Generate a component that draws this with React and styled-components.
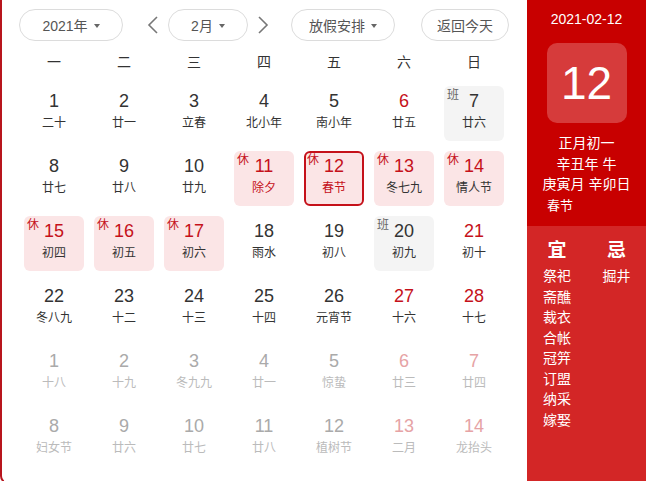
import React from "react";
import styled, { createGlobalStyle } from "styled-components";

const Global = createGlobalStyle`
  html, body { margin: 0; padding: 0; background: #fff; overflow: hidden; }
  body { font-family: "Liberation Sans", "Noto Sans CJK SC", sans-serif; }
`;

const RED = "#c5111a";

const Frame = styled.div`
  display: flex;
  width: 644px;
  height: 482px;
  border-left: 2px solid #b8151d;
  border-bottom: 2px solid #b8151d;
  border-bottom-left-radius: 8px;
  overflow: hidden;
`;

const Main = styled.div`
  width: 525px;
  flex: none;
  padding: 9px 18px 0 17px;
  box-sizing: border-box;
`;

const Toolbar = styled.div`
  display: flex;
  align-items: center;
  height: 32px;
`;

const Pill = styled.div`
  box-sizing: border-box;
  height: 32px;
  width: ${(p) => p.$w}px;
  margin-left: ${(p) => p.$ml || 0}px;
  border: 1px solid #dcdcdc;
  border-radius: 16px;
  display: flex;
  align-items: center;
  justify-content: center;
  gap: 6px;
  font-size: 14px;
  color: #555;
`;

const Caret = styled.span`
  width: 0;
  height: 0;
  border-left: 3.5px solid transparent;
  border-right: 3.5px solid transparent;
  border-top: 4px solid #666;
  margin-top: 1px;
`;

const Chevron = styled.div`
  width: 14px;
  height: 32px;
  margin-left: ${(p) => p.$ml}px;
  display: flex;
  align-items: center;
  justify-content: center;
`;

const Grid = styled.div`
  display: grid;
  grid-template-columns: repeat(7, 70px);
  grid-template-rows: 40px;
  grid-auto-rows: 65px;
`;

const WeekHead = styled.div`
  height: 40px;
  display: flex;
  align-items: center;
  justify-content: center;
  font-size: 14px;
  color: #333;
`;

const Cell = styled.div`
  padding: 5px;
  box-sizing: border-box;
`;

const DayBox = styled.div`
  position: relative;
  height: 55px;
  box-sizing: border-box;
  border-radius: 6px;
  text-align: center;
  padding-top: ${(p) => (p.$today ? 2 : 4)}px;
  background: ${(p) =>
    p.$kind === "rest" ? "#fbe5e6" : p.$kind === "work" ? "#f4f4f4" : "transparent"};
  border: ${(p) => (p.$today ? `2px solid ${RED}` : "none")};
`;

const Num = styled.div`
  font-size: 18px;
  line-height: 22px;
  color: ${(p) => p.$c};
`;

const Lunar = styled.div`
  margin-top: 3px;
  font-size: 12px;
  line-height: 16px;
  color: ${(p) => p.$c};
`;

const Tag = styled.span`
  position: absolute;
  left: ${(p) => (p.$today ? 1 : 3)}px;
  top: ${(p) => (p.$today ? 0 : 2)}px;
  font-size: 12px;
  line-height: 14px;
  color: ${(p) => (p.$work ? "#666" : RED)};
`;

const Side = styled.div`
  width: 119px;
  flex: none;
  display: flex;
  flex-direction: column;
  color: #fff;
`;

const SideTop = styled.div`
  background: #c80000;
  height: 226px;
  display: flex;
  flex-direction: column;
  align-items: center;
  padding-top: 11px;
  box-sizing: border-box;
`;

const DateLine = styled.div`
  font-size: 14px;
  line-height: 17px;
`;

const BigDay = styled.div`
  margin-top: 15px;
  width: 80px;
  height: 80px;
  border-radius: 10px;
  background: #d63b3b;
  display: flex;
  align-items: center;
  justify-content: center;
  font-size: 46px;
  line-height: 1;
`;

const Info = styled.div`
  margin-top: 10px;
  font-size: 14px;
  line-height: 20.5px;
  text-align: center;
`;

const Festival = styled.div`
  align-self: flex-start;
  margin: 1px 0 0 20px;
  font-size: 13px;
  line-height: 20px;
`;

const SideBottom = styled.div`
  flex: 1;
  background: #d32626;
  display: grid;
  grid-template-columns: 60px 59px;
  align-content: start;
  padding-top: 12px;
`;

const YiCol = styled.div`
  display: flex;
  flex-direction: column;
  align-items: center;
`;

const YiHead = styled.div`
  font-size: 19px;
  font-weight: bold;
  line-height: 26px;
  margin-bottom: 2px;
`;

const YiItem = styled.div`
  font-size: 14px;
  line-height: 20.5px;
`;

const ChevronIcon = ({ dir }) => (
  <svg width="12" height="18" viewBox="0 0 12 18">
    <path
      d={dir === "l" ? "M10 1 L2 9 L10 17" : "M2 1 L10 9 L2 17"}
      fill="none"
      stroke="#777"
      strokeWidth="1.6"
    />
  </svg>
);

const N = "#333";
const R = RED;
const G = "#aaa";
const GL = "#bbb";
const PR = "#e6a3a5";

const days = [
  { d: 1, l: "二十" }, { d: 2, l: "廿一" }, { d: 3, l: "立春" }, { d: 4, l: "北小年" },
  { d: 5, l: "南小年" }, { d: 6, l: "廿五", c: R }, { d: 7, l: "廿六", k: "work" },
  { d: 8, l: "廿七" }, { d: 9, l: "廿八" }, { d: 10, l: "廿九" },
  { d: 11, l: "除夕", k: "rest", c: R, lc: R }, { d: 12, l: "春节", k: "rest", c: R, lc: R, today: true },
  { d: 13, l: "冬七九", k: "rest", c: R }, { d: 14, l: "情人节", k: "rest", c: R },
  { d: 15, l: "初四", k: "rest", c: R }, { d: 16, l: "初五", k: "rest", c: R },
  { d: 17, l: "初六", k: "rest", c: R }, { d: 18, l: "雨水" }, { d: 19, l: "初八" },
  { d: 20, l: "初九", k: "work" }, { d: 21, l: "初十", c: R },
  { d: 22, l: "冬八九" }, { d: 23, l: "十二" }, { d: 24, l: "十三" }, { d: 25, l: "十四" },
  { d: 26, l: "元宵节" }, { d: 27, l: "十六", c: R }, { d: 28, l: "十七", c: R },
  { d: 1, l: "十八", c: G, lc: GL }, { d: 2, l: "十九", c: G, lc: GL }, { d: 3, l: "冬九九", c: G, lc: GL },
  { d: 4, l: "廿一", c: G, lc: GL }, { d: 5, l: "惊蛰", c: G, lc: GL }, { d: 6, l: "廿三", c: PR, lc: GL },
  { d: 7, l: "廿四", c: PR, lc: GL },
  { d: 8, l: "妇女节", c: G, lc: GL }, { d: 9, l: "廿六", c: G, lc: GL }, { d: 10, l: "廿七", c: G, lc: GL },
  { d: 11, l: "廿八", c: G, lc: GL }, { d: 12, l: "植树节", c: G, lc: GL }, { d: 13, l: "二月", c: PR, lc: GL },
  { d: 14, l: "龙抬头", c: PR, lc: GL },
];

const weeks = ["一", "二", "三", "四", "五", "六", "日"];
const yi = ["祭祀", "斋醮", "裁衣", "合帐", "冠笄", "订盟", "纳采", "嫁娶"];
const ji = ["掘井"];

export default function App() {
  return (
    <>
      <Global />
      <Frame>
        <Main>
          <Toolbar>
            <Pill $w={104}>2021年<Caret /></Pill>
            <Chevron $ml={23}><ChevronIcon dir="l" /></Chevron>
            <Pill $w={80} $ml={8}>2月<Caret /></Pill>
            <Chevron $ml={8}><ChevronIcon dir="r" /></Chevron>
            <Pill $w={104} $ml={21}>放假安排<Caret /></Pill>
            <Pill $w={88} $ml={26}>返回今天</Pill>
          </Toolbar>
          <Grid>
            {weeks.map((w) => (
              <WeekHead key={w}>{w}</WeekHead>
            ))}
            {days.map((x, i) => (
              <Cell key={i}>
                <DayBox $kind={x.k} $today={x.today}>
                  {x.k && (
                    <Tag $work={x.k === "work"} $today={x.today}>
                      {x.k === "work" ? "班" : "休"}
                    </Tag>
                  )}
                  <Num $c={x.c || N}>{x.d}</Num>
                  <Lunar $c={x.lc || (x.c === G || x.c === PR ? GL : N)}>{x.l}</Lunar>
                </DayBox>
              </Cell>
            ))}
          </Grid>
        </Main>
        <Side>
          <SideTop>
            <DateLine>2021-02-12</DateLine>
            <BigDay>12</BigDay>
            <Info>
              正月初一<br />辛丑年 牛<br />庚寅月 辛卯日
            </Info>
            <Festival>春节</Festival>
          </SideTop>
          <SideBottom>
            <YiCol>
              <YiHead>宜</YiHead>
              {yi.map((t) => (
                <YiItem key={t}>{t}</YiItem>
              ))}
            </YiCol>
            <YiCol>
              <YiHead>忌</YiHead>
              {ji.map((t) => (
                <YiItem key={t}>{t}</YiItem>
              ))}
            </YiCol>
          </SideBottom>
        </Side>
      </Frame>
    </>
  );
}
